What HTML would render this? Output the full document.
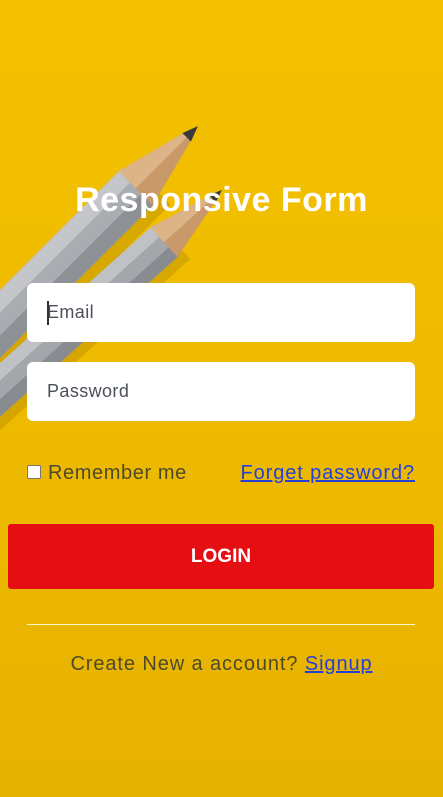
<!DOCTYPE html>
<html><head><style>
*{margin:0;padding:0;box-sizing:border-box}
body{width:443px;height:797px;overflow:hidden;position:relative;font-family:"Liberation Sans",sans-serif;background:linear-gradient(180deg,#f4c200 0%,#eeba00 50%,#e6b200 100%)}
svg.bg{position:absolute;left:0;top:0}
.t{position:absolute;left:0;width:443px;text-align:center;top:181px;color:#fff;font-weight:bold;font-size:34px;letter-spacing:0.5px}
.in{position:absolute;left:27px;width:388px;height:59px;background:#fff;border-radius:6px;font-size:18px;color:#4a4f5a;padding-left:20px;line-height:59px;letter-spacing:0.4px}
.cb{position:absolute;left:27px;top:465px;width:14px;height:14px;border:1px solid #777;border-radius:2px;background:#fff}
.rm{position:absolute;left:48px;top:462px;font-size:20px;color:#4d4a2a;letter-spacing:0.6px}
.fp{position:absolute;right:28px;top:462px;font-size:20px;color:#2440d8;text-decoration:underline;letter-spacing:0.9px}
.btn{position:absolute;left:8px;top:524px;width:426px;height:65px;background:#e50e12;border-radius:3px;color:#fff;font-weight:bold;font-size:19px;text-align:center;line-height:65px}
.hr{position:absolute;left:27px;top:624px;width:388px;height:1px;background:#fff5d0}
.cr{position:absolute;left:0;width:443px;text-align:center;top:653px;font-size:20px;color:#4d4a2a;letter-spacing:0.9px}
.cr a{color:#2440d8;text-decoration:underline}
</style></head><body>
<svg class="bg" width="443" height="797">
<g transform="translate(198,126) rotate(-45)">
<rect x="-420" y="-16" width="345" height="52" fill="#9a7800" opacity="0.3"/>
<rect x="-420" y="-24" width="335" height="48" fill="#a9acb0"/>
<rect x="-420" y="-24" width="335" height="16" fill="#c4c6c9"/>
<rect x="-420" y="8" width="335" height="16" fill="#8d9094"/>
<polygon points="-88,-24 -88,24 -14,5 -14,-5" fill="#c9996a"/>
<polygon points="-88,-24 -14,-5 -14,0 -88,0" fill="#ddb487"/>
<polygon points="-16,-6 -16,6 0,0" fill="#3a3a3a"/>
</g>
<g transform="translate(222,190) rotate(-42)">
<rect x="-420" y="-14" width="350" height="44" fill="#9a7800" opacity="0.3"/>
<rect x="-420" y="-20" width="345" height="40" fill="#a3a6aa"/>
<rect x="-420" y="-20" width="345" height="13" fill="#bfc1c4"/>
<rect x="-420" y="7" width="345" height="13" fill="#888b90"/>
<polygon points="-78,-20 -78,20 -12,4 -12,-4" fill="#c9996a"/>
<polygon points="-78,-20 -12,-4 -12,0 -78,0" fill="#ddb487"/>
<polygon points="-13,-5 -13,5 0,0" fill="#3a3a3a"/>
</g>
</svg>
<div class="t">Responsive Form</div>
<div class="in" style="top:283px">Email</div>
<div style="position:absolute;left:47px;top:301px;width:2px;height:24px;background:#333"></div>
<div class="in" style="top:362px">Password</div>
<div class="cb"></div>
<div class="rm">Remember me</div>
<div class="fp">Forget password?</div>
<div class="btn">LOGIN</div>
<div class="hr"></div>
<div class="cr">Create New a account? <a>Signup</a></div>
</body></html>
